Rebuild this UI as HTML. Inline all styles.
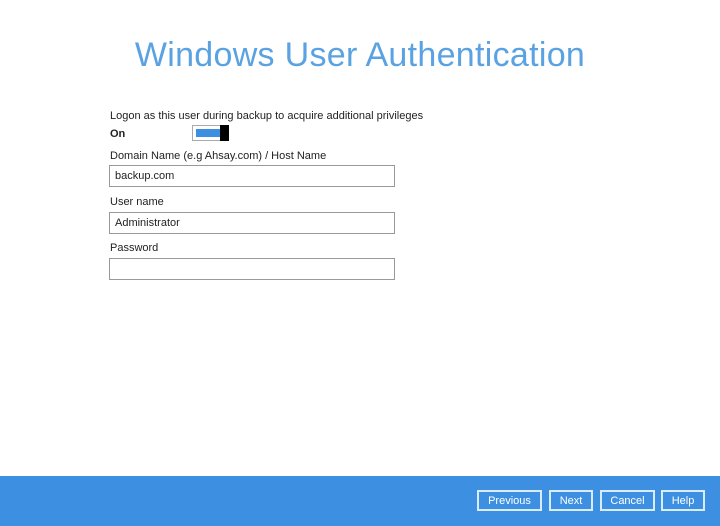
<html><head><style>
body{margin:0;width:720px;height:526px;background:#fff;font-family:"Liberation Sans",sans-serif;position:relative;overflow:hidden}
.t{position:absolute;left:0;width:720px;top:36px;text-align:center;font-size:34px;color:#5aa2e2;font-weight:300;letter-spacing:0.3px}
.l{position:absolute;left:110px;font-size:11px;color:#222}
.in{position:absolute;left:109px;border:1px solid #999;font-size:11px;line-height:20px;padding-left:5px;box-sizing:border-box;width:286px;height:22px;color:#222}
.f{position:absolute;left:0;top:476px;width:720px;height:50px;background:#3d8fe2}
.b{position:absolute;top:490px;height:21px;border:2px solid #d8ecfb;box-sizing:border-box;color:#fff;font-size:11px;text-align:center;line-height:18px}
</style></head><body>
<div class="t">Windows User Authentication</div>
<div class="l" style="top:110px">Logon as this user during backup to acquire additional privileges</div>
<div class="l" style="top:128px;font-weight:bold">On</div>
<div style="position:absolute;left:192px;top:125px;width:36px;height:16px;border:1px solid #aaa;box-sizing:border-box;background:#fff"></div>
<div style="position:absolute;left:196px;top:129px;width:26px;height:8px;background:#3d8fe2"></div>
<div style="position:absolute;left:220px;top:125px;width:9px;height:16px;background:#000"></div>
<div class="l" style="top:150px">Domain Name (e.g Ahsay.com) / Host Name</div>
<div class="in" style="top:165px">backup.com</div>
<div class="l" style="top:196px">User name</div>
<div class="in" style="top:212px">Administrator</div>
<div class="l" style="top:242px">Password</div>
<div class="in" style="top:258px"></div>
<div class="f"></div>
<div class="b" style="left:477px;width:65px">Previous</div>
<div class="b" style="left:549px;width:44px">Next</div>
<div class="b" style="left:600px;width:55px">Cancel</div>
<div class="b" style="left:661px;width:44px">Help</div>
</body></html>
